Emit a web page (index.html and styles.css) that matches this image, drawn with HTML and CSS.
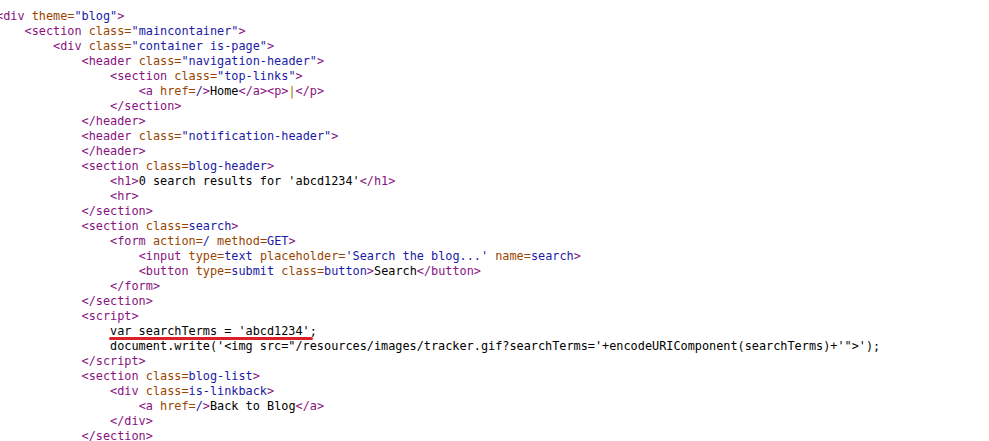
FILE: index.html
```html
<!DOCTYPE html>
<html lang="en">
<head>
    <meta charset="UTF-8">
    <meta name="viewport" content="width=device-width, initial-scale=1.0">
    <link rel="stylesheet" href="styles.css">
</head>
<body>
<pre class="sourceView"><span class="tag">&lt;div </span><span class="attr">theme=</span><span class="val">"blog"</span><span class="tag">&gt;</span>
    <span class="tag">&lt;section </span><span class="attr">class=</span><span class="val">"maincontainer"</span><span class="tag">&gt;</span>
        <span class="tag">&lt;div </span><span class="attr">class=</span><span class="val">"container is-page"</span><span class="tag">&gt;</span>
            <span class="tag">&lt;header </span><span class="attr">class=</span><span class="val">"navigation-header"</span><span class="tag">&gt;</span>
                <span class="tag">&lt;section </span><span class="attr">class=</span><span class="val">"top-links"</span><span class="tag">&gt;</span>
                    <span class="tag">&lt;a </span><span class="attr">href=</span><span class="val">/</span><span class="tag">&gt;</span>Home<span class="tag">&lt;/a&gt;&lt;p&gt;</span><span class="pipe">|</span><span class="tag">&lt;/p&gt;</span>
                <span class="tag">&lt;/section&gt;</span>
            <span class="tag">&lt;/header&gt;</span>
            <span class="tag">&lt;header </span><span class="attr">class=</span><span class="val">"notification-header"</span><span class="tag">&gt;</span>
            <span class="tag">&lt;/header&gt;</span>
            <span class="tag">&lt;section </span><span class="attr">class=</span><span class="val">blog-header</span><span class="tag">&gt;</span>
                <span class="tag">&lt;h1&gt;</span>0 search results for 'abcd1234'<span class="tag">&lt;/h1&gt;</span>
                <span class="tag">&lt;hr&gt;</span>
            <span class="tag">&lt;/section&gt;</span>
            <span class="tag">&lt;section </span><span class="attr">class=</span><span class="val">search</span><span class="tag">&gt;</span>
                <span class="tag">&lt;form </span><span class="attr">action=</span><span class="val">/</span> <span class="attr">method=</span><span class="val">GET</span><span class="tag">&gt;</span>
                    <span class="tag">&lt;input </span><span class="attr">type=</span><span class="val">text</span> <span class="attr">placeholder=</span><span class="val">'Search the blog...'</span> <span class="attr">name=</span><span class="val">search</span><span class="tag">&gt;</span>
                    <span class="tag">&lt;button </span><span class="attr">type=</span><span class="val">submit</span> <span class="attr">class=</span><span class="val">button</span><span class="tag">&gt;</span>Search<span class="tag">&lt;/button&gt;</span>
                <span class="tag">&lt;/form&gt;</span>
            <span class="tag">&lt;/section&gt;</span>
            <span class="tag">&lt;script&gt;</span>
                <span class="redMark">var searchTerms = 'abcd1234'</span>;
                document.write('&lt;img src="/resources/images/tracker.gif?searchTerms='+encodeURIComponent(searchTerms)+'"&gt;');
            <span class="tag">&lt;/script&gt;</span>
            <span class="tag">&lt;section </span><span class="attr">class=</span><span class="val">blog-list</span><span class="tag">&gt;</span>
                <span class="tag">&lt;div </span><span class="attr">class=</span><span class="val">is-linkback</span><span class="tag">&gt;</span>
                    <span class="tag">&lt;a </span><span class="attr">href=</span><span class="val">/</span><span class="tag">&gt;</span>Back to Blog<span class="tag">&lt;/a&gt;</span>
                <span class="tag">&lt;/div&gt;</span>
            <span class="tag">&lt;/section&gt;</span></pre>
</body>
</html>
```

FILE: styles.css
```css
body {
    margin: 0px;
    background-color: #ffffff;
    overflow: hidden;
}
.sourceView {
    margin: 9px 0 0 -4px;
    padding: 0;
    font-family: "DejaVu Sans Mono", "Liberation Mono", monospace;
    font-size: 11.85px;
    line-height: 15px;
    color: #000000;
    white-space: pre;
}
.tag {
    color: #881280;
}
.attr {
    color: #994500;
}
.val {
    color: #1a1aa6;
}
.pipe {
    color: #a86a00;
}
/* red line drawn under the injected value */
.redMark {
    position: relative;
}
.redMark::after {
    content: '';
    position: absolute;
    left: -1px;
    right: -3px;
    top: 13px;
    height: 3px;
    border-radius: 2px;
    background-color: #dc2229;
}
```
